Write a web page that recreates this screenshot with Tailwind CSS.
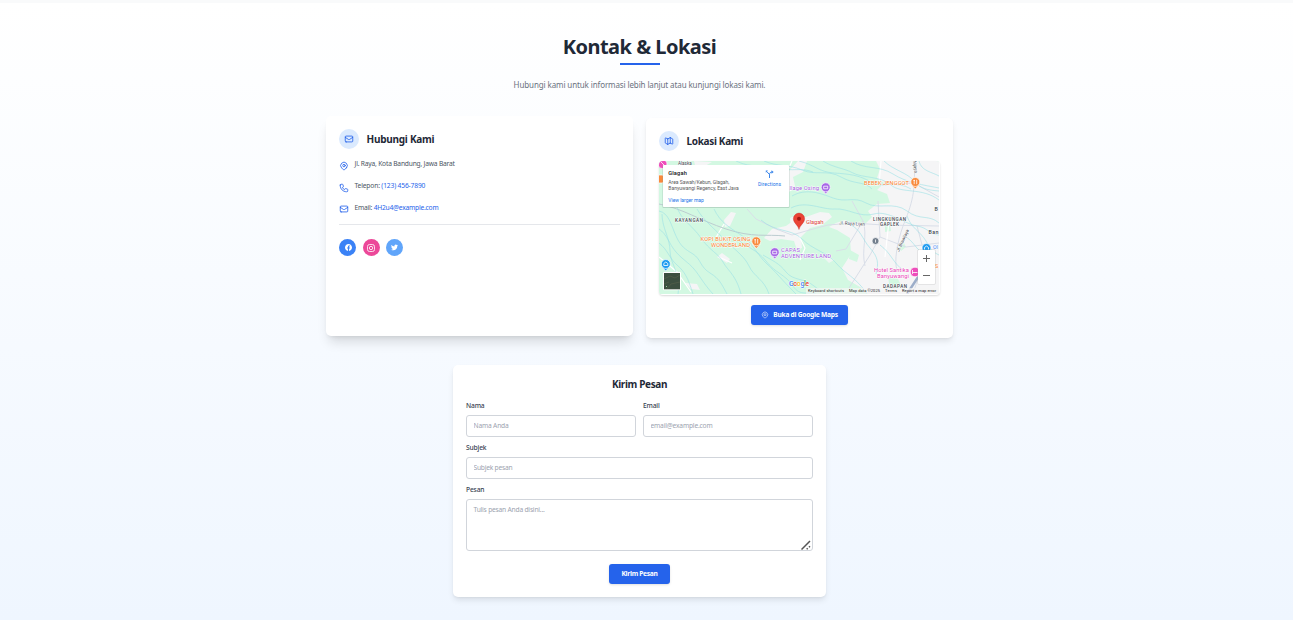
<!DOCTYPE html>
<html lang="id">
<head>
<meta charset="utf-8">
<title>Kontak &amp; Lokasi</title>
<script src="https://cdn.jsdelivr.net/npm/@tailwindcss/browser@4"></script>
</head>
<body class="h-[620px] overflow-hidden bg-gray-50 pt-[3px] font-['Noto_Sans','Open_Sans',sans-serif] text-[6.67px] text-[#1f2937]">
<section class="h-[617px] bg-linear-to-b from-white to-[#eff6ff] pr-[14px] pt-8">
  <header class="flex flex-col items-center">
    <h2 class="h-6 text-[20px] leading-6 font-bold tracking-[-0.52px] whitespace-nowrap">Kontak &amp; Lokasi</h2>
    <div class="mt-[4px] h-[2px] w-10 bg-[#2563eb]"></div>
    <p class="mt-[12px] h-4 text-[8px] leading-[16px] tracking-[-0.11px] whitespace-nowrap text-[#6b7280]">Hubungi kami untuk informasi lebih lanjut atau kunjungi lokasi kami.</p>
  </header>

  <div class="mx-auto mt-[23px] flex w-[627px] gap-[13px]">
    <div class="h-[220px] w-[307px] rounded-[5px] bg-white px-[13px] pt-[13px] shadow-[0_9px_12px_-3px_rgb(0_0_0/0.13),0_3px_5px_-3px_rgb(0_0_0/0.12)]">
      <div class="flex items-center gap-[7.5px]">
        <div class="flex size-5 items-center justify-center rounded-full bg-[#dbeafe] text-[#2563eb]">
          <svg class="size-[10px]" viewBox="0 0 24 24" fill="none" stroke="currentColor" stroke-width="2" stroke-linecap="round" stroke-linejoin="round"><path d="M3 8l7.89 5.26a2 2 0 0 0 2.22 0L21 8M5 19h14a2 2 0 0 0 2-2V7a2 2 0 0 0-2-2H5a2 2 0 0 0-2 2v10a2 2 0 0 0 2 2z"/></svg>
        </div>
        <h3 class="pt-px text-[10px] leading-[19px] font-bold tracking-[-0.25px] whitespace-nowrap">Hubungi Kami</h3>
      </div>
      <ul class="mt-[9px] text-[#4b5563]">
        <li class="flex h-[22px] gap-[5.5px]">
          <svg class="mt-[3px] size-[10px] text-[#2563eb]" viewBox="0 0 24 24" fill="none" stroke="currentColor" stroke-width="2" stroke-linecap="round" stroke-linejoin="round"><path d="M17.657 16.657L13.414 20.9a2 2 0 0 1-2.827 0l-4.244-4.243a8 8 0 1 1 11.314 0z"/><path d="M15 11a3 3 0 1 1-6 0 3 3 0 0 1 6 0z"/></svg>
          <span class="pt-px leading-[10px] tracking-[-0.19px] whitespace-nowrap">Jl. Raya, Kota Bandung, Jawa Barat</span>
        </li>
        <li class="flex h-[22px] gap-[5.5px]">
          <svg class="mt-[3px] size-[10px] text-[#2563eb]" viewBox="0 0 24 24" fill="none" stroke="currentColor" stroke-width="2" stroke-linecap="round" stroke-linejoin="round"><path d="M3 5a2 2 0 0 1 2-2h3.28a1 1 0 0 1 .948.684l1.498 4.493a1 1 0 0 1-.502 1.21l-2.257 1.13a11.042 11.042 0 0 0 5.516 5.516l1.13-2.257a1 1 0 0 1 1.21-.502l4.493 1.498a1 1 0 0 1 .684.949V19a2 2 0 0 1-2 2h-1C9.716 21 3 14.284 3 6V5z"/></svg>
          <span class="pt-px leading-[10px] tracking-[-0.15px] whitespace-nowrap">Telepon: <a class="text-[#2563eb]">(123) 456-7890</a></span>
        </li>
        <li class="flex h-[22px] gap-[5.5px]">
          <svg class="mt-[2px] size-[10px] text-[#2563eb]" viewBox="0 0 24 24" fill="none" stroke="currentColor" stroke-width="2" stroke-linecap="round" stroke-linejoin="round"><path d="M3 8l7.89 5.26a2 2 0 0 0 2.22 0L21 8M5 19h14a2 2 0 0 0 2-2V7a2 2 0 0 0-2-2H5a2 2 0 0 0-2 2v10a2 2 0 0 0 2 2z"/></svg>
          <span class="pt-px leading-[10px] tracking-[-0.21px] whitespace-nowrap">Email: <a class="text-[#2563eb]">4H2u4@example.com</a></span>
        </li>
      </ul>
      <div class="flex gap-[6.67px] border-t border-[#e5e7eb] pt-[14px] text-white">
        <a class="flex size-[17px] items-center justify-center rounded-full bg-[#3b82f6]"><svg class="ml-px size-[7px]" viewBox="0 0 24 24" fill="currentColor"><path d="M24 12.07C24 5.4 18.63 0 12 0S0 5.4 0 12.07c0 6.03 4.39 11.02 10.13 11.93v-8.44H7.08v-3.49h3.05V9.41c0-3.02 1.79-4.69 4.53-4.69 1.31 0 2.68.24 2.68.24v2.97h-1.51c-1.49 0-1.96.93-1.96 1.89v2.25h3.33l-.53 3.49h-2.8V24C19.61 23.09 24 18.1 24 12.07z"/></svg></a>
        <a class="flex size-[17px] items-center justify-center rounded-full bg-[#ec4899]"><svg class="size-[8px]" viewBox="0 0 24 24" fill="none" stroke="currentColor" stroke-width="2.4"><rect x="1.5" y="1.5" width="21" height="21" rx="6"/><circle cx="12" cy="12" r="5"/><circle cx="18.3" cy="5.7" r="1.2" fill="currentColor" stroke="none"/></svg></a>
        <a class="flex size-[17px] items-center justify-center rounded-full bg-[#60a5fa]"><svg class="size-[7px]" viewBox="0 0 24 24" fill="currentColor"><path d="M23.95 4.57a10 10 0 0 1-2.82.77 4.96 4.96 0 0 0 2.16-2.72c-.95.55-2 .95-3.13 1.18a4.92 4.92 0 0 0-8.38 4.48C7.69 8.1 4.07 6.13 1.64 3.16a4.92 4.92 0 0 0 1.52 6.57 4.9 4.9 0 0 1-2.23-.61v.06a4.92 4.92 0 0 0 3.95 4.83 5 5 0 0 1-2.21.08 4.94 4.94 0 0 0 4.6 3.42A9.87 9.87 0 0 1 0 19.54a13.99 13.99 0 0 0 7.55 2.21c9.05 0 14-7.5 14-13.98 0-.21 0-.42-.02-.63a9.94 9.94 0 0 0 2.42-2.57z"/></svg></a>
      </div>
    </div>

    <div class="mt-[2px] flex h-[220px] w-[307px] flex-col items-center rounded-[5px] bg-white px-[13px] pt-[13px] shadow-[0_4px_6px_-1px_rgb(0_0_0/0.1),0_1px_3px_-1px_rgb(0_0_0/0.08)]">
      <div class="flex w-full items-center gap-[7.5px]">
        <div class="flex size-5 items-center justify-center rounded-full bg-[#dbeafe] text-[#2563eb]">
          <svg class="size-[10px]" viewBox="0 0 24 24" fill="none" stroke="currentColor" stroke-width="2" stroke-linecap="round" stroke-linejoin="round"><path d="M9 20l-5.447-2.724A1 1 0 0 1 3 16.382V5.618a1 1 0 0 1 1.447-.894L9 7m0 13l6-3m-6 3V7m6 10l4.553 2.276A1 1 0 0 0 21 18.382V7.618a1 1 0 0 0-.553-.894L15 4m0 13V4m0 0L9 7"/></svg>
        </div>
        <h3 class="pt-px text-[10px] leading-[19px] font-bold tracking-[-0.33px] whitespace-nowrap">Lokasi Kami</h3>
      </div>
      <div class="mt-[10px] h-[134px] w-full overflow-hidden rounded-[4px] shadow-[0_1px_2px_rgb(0_0_0/0.15)]">
        <svg class="block h-[133px] w-[280px] bg-[#d3f8e2] font-['Roboto',sans-serif]" viewBox="0 0 280 133" fill="none">
          <!-- built-up areas -->
          <g fill="#f5f5f6">
            <path d="M217 0l4 8-3 9 7 5-7 7 10 4 3 9-13 1-9 7 4 6-7 7-12-1-8-3-9 3-7 4 8 3 13 8 1 16-9 14 6 12 12 7 8 7H280V0z"/>
            <path d="M105 77l8-9 14-3 11-8 9-1 14-5 9 1 3 4-10 8-12 3-9 9 1 11-5 2-3-9-13-2-11 2zM131 57l10-5 5 5-7 9-7 2zM127 13l12-13h9l-4 11-10 5 2 9-6 6-10-3 8-9zM65 59l7-8 5 1-6 13-5 1zM58 96l5-4 8 6-3 4zM26 122l12 1 3 6-9-1zM82 32l7-3 6 5-4 6-6-2zM35 0l18 1-7 4-10-1z"/>
            <path d="M164 96l6-1 5 4-5 3z" opacity=".8"/>
          </g>
          <g fill="#d3f8e2"><path d="M240 85l5-3 2 4-5 4zM226 61l5 2 1 7-6 1zM191 89l9 5-2 7-8-3zM229 116l10 2 4 8-12 2z"/></g>
          <!-- roads -->
          <g stroke="#d9dee8" stroke-width="1">
            <path d="M88 48l9 10 20 10 16 6 14-4 22-6 25-2 30 2 56 1M255 0c2 30-2 43-11 65-6 17-9 35-6 44M204 60c5 15-2 28 2 45M219 40l2 36-10 18-21 33M258 65l8 30-12 38M219 24l36-2 25 14M221 76l26 10 33-4M193 40l11 20-17 28-10 2"/>
          </g>
          <g stroke="#fff" stroke-width="1.2"><path d="M133 0l-7 16 6 14M140 75l6 12-5 12M65 63l-9 15M0 96l18 15 14 20M60 96l13 6M222 0l-2 24M230 60l-4 36"/></g>
          <path d="M0 43c25 5 40 16 67 25s40 5 59 7" stroke="#bcccd0" stroke-width="1"/>
          <path d="M248 133l13-20 8-8" stroke="#9cadc9" stroke-width="2.5"/>
          <!-- rivers -->
          <g stroke="#9ce0e6" stroke-width=".7" stroke-opacity=".85">
            <path d="M0 50c10 2 12 14 17 25s9 13 17 18 7 13 17 19 12 12 17 21M0 68c8 5 10 15 17 23s12 10 18 17 9 14 19 25M0 82c9 7 10 15 18 22s11 13 16 29M18 46c4 13 15 18 24 31s17 15 22 24 13 13 18 32M38 48c7 12 16 18 25 28s22 18 27 29 15 13 20 28M55 48c6 13 16 19 27 26s17 21 26 29 13 14 29 30M75 75c12 12 23 13 32 25s20 14 27 25 16 5 23 8M104 94c10 6 16 8 23 17s19 6 28 14 15 3 22 8"/>
            <path d="M77 0c16 8 29 3 43 7s21-1 34 4M105 0c14 6 24 3 38 9s25-1 39 7 24 4 31 12M140 0c16 4 20 11 35 12s25 2 37 9 26-2 40 7M164 0c11 7 21 7 30 12s28 3 38 12 31 2 48 15M192 0c14 9 28 4 42 13s31 11 46 14M133 35c14-8 28-3 41 2s21-2 33 5 28-2 41 8 22 3 32 12M132 47c15-8 31 2 44 1s25 9 39 5 31 10 43 12 11 8 22 9M102 59c15 13 30 8 41 19s25 13 34 24 20 14 31 31M248 55c4 12 13 15 19 25s7 11 13 14M245 75c11 5 11 15 25 21M225 0c9 9 24 12 30 20s14 9 25 10M260 0c2 10 13 11 20 15M221 84c12 9 12 17 24 26M190 63c12 5 13 15 21 24s9 15 6 26M3 53c0 14 8 24 8 37s12 24 8 43"/>
          </g>
          <!-- place labels -->
          <g font-size="5.3" stroke="#fff" stroke-width=".8" paint-order="stroke" stroke-linejoin="round">
            <g fill="#f97e2b">
              <text x="205" y="23.8" textLength="45" font-size="5.8">BEBEK JENGGOT</text>
              <text x="41.500" y="80.3" textLength="50" font-size="5.8">KOPI BUKIT OSING</text>
              <text x="52" y="86" textLength="39" font-size="5.8">WONDERLAND</text>
              <text x="276" y="107">S</text>
            </g>
            <g fill="#a35bdd">
              <text x="130.500" y="29.200" textLength="29.500" font-size="5.8">llage Osing</text>
              <text x="122" y="91" textLength="19" font-size="5.8">CAPAS</text>
              <text x="122" y="97" textLength="50" font-size="5.8">ADVENTURE LAND</text>
            </g>
            <g fill="#e941b6">
              <text x="215" y="111" textLength="35" font-size="5.8">Hotel Santika</text>
              <text x="218" y="117" textLength="32" font-size="5.8">Banyuwangi</text>
            </g>
            <text x="147" y="62.500" textLength="17.500" font-size="6" fill="#dc3d35">Glagah</text>
            <text x="274" y="87.500" fill="#4285f4">Ol</text>
            <g fill="#40464e">
              <text x="16" y="61" font-size="4.6" font-weight="500" textLength="28">KAYANGAN</text>
              <text x="214" y="60" font-size="4.6" font-weight="500" textLength="33">LINGKUNGAN</text>
              <text x="221" y="65" font-size="4.6" font-weight="500" textLength="19">GAPLEK</text>
              <text x="224" y="127" font-size="4.6" font-weight="500" textLength="24">DADAPAN</text>
              <text x="180" y="63.500" font-size="4.8" textLength="26" transform="rotate(3 180 63)">Jl. Raya Lijen</text>
              <text x="240" y="91" font-size="4.600" textLength="24" transform="rotate(-65 240 91)">Jl. Brawijaya</text>
              <text x="254" y="-1" font-size="4.600" textLength="13" transform="rotate(83 254 -1)">Wijaya</text>
              <text x="269.500" y="73" font-weight="500" textLength="10">Ban</text>
              <text x="275.500" y="49.500" font-weight="500">B</text>
              <text x="19" y="4" font-size="4.600">Alaska</text>
            </g>
          </g>
          <!-- pins -->
          <g stroke="#fff" stroke-width=".7">
            <path d="M252.500 24l3.800 4 3.800-4z" fill="#f98a3c"/><circle cx="256.300" cy="21" r="4.500" fill="#f98a3c"/>
            <path d="M93.500 83.500l3.800 4 3.800-4z" fill="#f98a3c"/><circle cx="97.300" cy="80.300" r="4.500" fill="#f98a3c"/>
            <path d="M163 29l3.700 4 3.700-4z" fill="#a667e6"/><circle cx="166.700" cy="26.300" r="4.500" fill="#a667e6"/>
            <path d="M112 94l3.700 4 3.700-4z" fill="#a667e6"/><circle cx="115.700" cy="91.200" r="4.500" fill="#a667e6"/>
            <path d="M3 106l3.700 4 3.700-4z" fill="#1e9bf0"/><circle cx="6.800" cy="103" r="4.500" fill="#1e9bf0"/>
            <circle cx="267.500" cy="87" r="4.500" fill="#1e9bf0"/>
            <circle cx="256" cy="111" r="4.800" fill="#ee4dbb"/>
            <circle cx="3.500" cy="3" r="4.500" fill="#ee4dbb"/>
            <rect x="-4" y="14" width="9" height="8" rx="2" fill="#f98a3c"/>
            <circle cx="216.500" cy="80" r="3.500" fill="#74808e"/>
          </g>
          <g stroke="#fff" stroke-width=".8">
            <path d="M255.200 18.800v4.400M257.700 18.800v4.400M254.400 19.500h1.600M96.200 78v4.500M98.700 78v4.500M95.400 78.800h1.600"/>
            <path d="M164.700 25.200h4v2.600h-4zM113.700 90.200h4v2.600h-4zM4.800 104.500v-2l2-1.500 2 1.500v2zM253.500 113v-4M253.500 111.500h5M265.500 88.500v-2l2-1.500 2 1.500v2M216.500 78.500v3M2 1l3 3"/>
          </g>
          <path d="M140 68.500c-.6-4.500-5.600-6-5.600-10.800a5.600 5.600 0 0 1 11.200 0c0 4.800-5 6.300-5.600 10.800z" fill="#ea4335" stroke="#c5221f" stroke-width=".4"/>
          <circle cx="140" cy="57.800" r="2" fill="#a31511"/>
          <!-- info window -->
          <rect x="3.500" y="4.500" width="127" height="42.500" rx="1" fill="#8aa79a" opacity=".4"/>
          <rect x="4" y="4" width="126" height="42" rx=".7" fill="#fff"/>
          <text x="9.300" y="13.700" font-size="5.700" font-weight="500" fill="#111" textLength="18.500">Glagah</text>
          <g font-size="5" fill="#5b5b5b">
            <text x="9.300" y="22.800" textLength="61">Area Sawah/Kebun, Glagah,</text>
            <text x="9.300" y="28.800" textLength="70.500">Banyuwangi Regency, East Java</text>
            <text x="9.300" y="41" textLength="35.500" fill="#1a73e8">View larger map</text>
            <text x="99" y="24.800" textLength="23" fill="#1a73e8">Directions</text>
          </g>
          <path d="M110.500 17v-3.500l-2.800-3M110.500 13.800c0-2 1-2.800 2.500-2.800" stroke="#3b86ea" stroke-width="1"/><path d="M112.500 9.300l2.200 1.700-2.200 1.700zM106.800 11.700V9.500h2.200z" fill="#3b86ea"/>
          <!-- satellite thumbnail -->
          <rect x="4" y="111" width="18" height="18.300" rx="1" fill="#fff"/>
          <rect x="5" y="112" width="16" height="16.300" fill="#3c5040"/>
          <path d="M5 118l6-3 5 2 5-3M8 128l4-5 9-2M5 123l5-2" stroke="#4d5b47" stroke-width="1"/><path d="M7 125.500h1" stroke="#9ad0a0"/>
          <!-- zoom control -->
          <rect x="258.500" y="88.500" width="18" height="35" rx="1" fill="#999" opacity=".35"/>
          <rect x="259" y="89" width="17" height="34" rx=".8" fill="#fff"/>
          <path d="M264 97.500h7M267.500 94v7M264 114.500h7" stroke="#666" stroke-width="1"/>
          <text x="130" y="124.500" font-size="7" font-weight="500" textLength="20" stroke="#fff" stroke-width=".8" paint-order="stroke"><tspan fill="#4285f4">G</tspan><tspan fill="#ea4335">o</tspan><tspan fill="#fbbc04">o</tspan><tspan fill="#4285f4">g</tspan><tspan fill="#34a853">l</tspan><tspan fill="#ea4335">e</tspan></text>
          <rect x="147" y="127" width="133" height="6" fill="#f5f5f5" opacity=".7"/>
          <g font-size="4" fill="#222">
            <text x="149" y="131.200" textLength="36">Keyboard shortcuts</text>
            <text x="190" y="131.200" textLength="31">Map data ©2025</text>
            <text x="226" y="131.200" textLength="12">Terms</text>
            <text x="243" y="131.200" textLength="34">Report a map error</text>
          </g>
        </svg>
      </div>
      <a class="mt-[10px] flex h-5 w-[97px] shrink-0 items-center justify-center gap-[4px] rounded-[3px] bg-[#2563eb] font-bold text-white shadow-sm">
        <svg class="size-[8px] opacity-80" viewBox="0 0 24 24" fill="none" stroke="currentColor" stroke-width="2.2"><path d="M17.657 16.657L13.414 20.9a2 2 0 0 1-2.827 0l-4.244-4.243a8 8 0 1 1 11.314 0z"/><path d="M15 11a3 3 0 1 1-6 0 3 3 0 0 1 6 0z"/></svg>
        <span class="tracking-[-0.26px] whitespace-nowrap">Buka di Google Maps</span>
      </a>
    </div>
  </div>

  <form class="mx-auto mt-[27px] h-[232px] w-[373px] rounded-[5px] bg-white px-[13px] pt-[13px] shadow-[0_4px_6px_-1px_rgb(0_0_0/0.1),0_1px_3px_-1px_rgb(0_0_0/0.08)]">
    <h3 class="h-[14px] text-center text-[10px] leading-[13px] font-bold tracking-[-0.36px]">Kirim Pesan</h3>
    <div class="mt-[9px] grid grid-cols-2 gap-[7px]">
      <label class="block h-[36px] leading-[10px] font-medium text-[#374151]"><span class="block tracking-[-0.15px]">Nama</span>
        <input type="text" placeholder="Nama Anda" class="mt-[4px] block h-[22px] w-full rounded-[3px] border border-[#d1d5db] bg-white px-[6.5px] pb-[2px] font-normal tracking-[-0.18px] placeholder:text-[#9ca3af]">
      </label>
      <label class="block h-[36px] leading-[10px] font-medium text-[#374151]"><span class="block tracking-[-0.15px]">Email</span>
        <input type="text" placeholder="email@example.com" class="mt-[4px] block h-[22px] w-full rounded-[3px] border border-[#d1d5db] bg-white px-[6.5px] pb-[2px] font-normal tracking-[-0.18px] placeholder:text-[#9ca3af]">
      </label>
    </div>
    <label class="mt-[6px] block h-[36px] leading-[10px] font-medium text-[#374151]"><span class="block tracking-[-0.15px]">Subjek</span>
      <input type="text" placeholder="Subjek pesan" class="mt-[4px] block h-[22px] w-full rounded-[3px] border border-[#d1d5db] bg-white px-[6.5px] pb-[2px] font-normal tracking-[-0.22px] placeholder:text-[#9ca3af]">
    </label>
    <label class="relative mt-[6px] block leading-[10px] font-medium text-[#374151]"><span class="block tracking-[-0.15px]">Pesan</span>
      <textarea placeholder="Tulis pesan Anda disini..." class="mt-[4px] block h-[52px] w-full resize-none rounded-[3px] border border-[#d1d5db] bg-white px-[6.5px] py-[5px] font-normal tracking-[-0.2px] placeholder:text-[#9ca3af]"></textarea>
      <svg class="absolute right-[2px] bottom-[1px] h-[10px] w-[10px]" viewBox="0 0 10 10" stroke="#555" stroke-width="1.5"><path d="M.5 9.500l8.500-8.500M5.700 9.300l1-1M8 7.300l1-1"/></svg>
    </label>
    <button type="button" class="mx-auto mt-[13px] block h-5 w-[61px] rounded-[3px] bg-[#2563eb] font-bold tracking-[-0.3px] whitespace-nowrap text-white shadow-sm">Kirim Pesan</button>
  </form>
</section>
</body>
</html>
